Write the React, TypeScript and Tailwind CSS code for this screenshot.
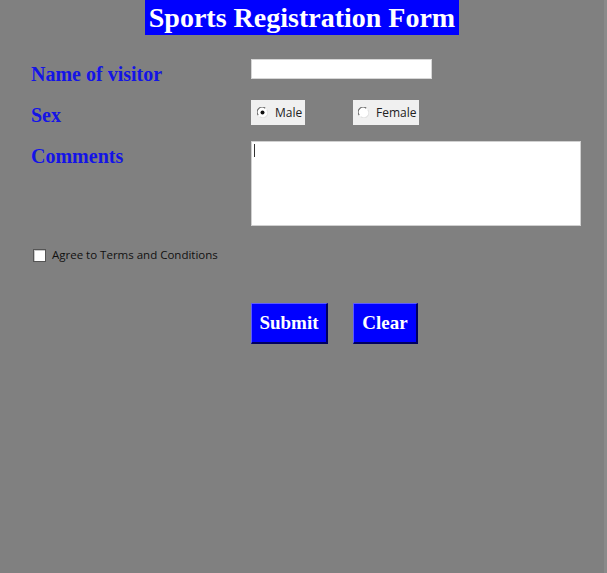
import { useState } from 'react';

function RadioDot({ checked }: { checked: boolean }) {
  return (
    <svg width="11" height="11" viewBox="0 0 11 11" className="shrink-0">
      <circle cx="5.5" cy="5.5" r="5" fill="#ffffff" />
      <path d="M1.2 8.2 A5 5 0 0 1 8.2 1.2" fill="none" stroke="#6b6b6b" strokeWidth="1.1" />
      <path d="M9.8 2.8 A5 5 0 0 1 2.8 9.8" fill="none" stroke="#e3e3e3" strokeWidth="1.1" />
      {checked && <circle cx="5.5" cy="5.5" r="2" fill="#111111" />}
    </svg>
  );
}

export default function App() {
  const [sex, setSex] = useState('male');
  const [agree, setAgree] = useState(false);

  return (
    <div className="flex min-h-[573px] w-full bg-[#808080]">
      <div className="flex-1">
        {/* Title */}
        <div className="flex justify-center">
          <h1 className="h-[35px] bg-[#0000ff] px-[4px] text-[28px] leading-[35px] font-bold text-white [font-family:'Liberation_Serif',serif]">
            Sports Registration Form
          </h1>
        </div>

        <form className="pl-[31px]" onSubmit={(e) => e.preventDefault()}>
          {/* Name */}
          <div className="mt-[24px] flex h-[20px]">
            <label className="mt-[3px] w-[220px] shrink-0 text-[20px] leading-[24px] font-bold text-[#1414e6] [font-family:'Liberation_Serif',serif]">
              Name of visitor
            </label>
            <input
              type="text"
              className="h-[20px] w-[181px] border border-[#d6d6d6] bg-white px-1 text-[12px] outline-none"
            />
          </div>

          {/* Sex */}
          <div className="mt-[21px] flex h-[25px]">
            <div className="mt-[3px] w-[220px] shrink-0 text-[20px] leading-[24px] font-bold text-[#1414e6] [font-family:'Liberation_Serif',serif]">
              Sex
            </div>
            <div className="flex gap-[48px]">
              <button
                type="button"
                onClick={() => setSex('male')}
                className="flex h-[25px] w-[54px] items-center gap-[7px] bg-[#f0f0f0] pl-[6px] text-[12px] text-[#222] [font-family:'Open_Sans',sans-serif]"
              >
                <RadioDot checked={sex === 'male'} />
                Male
              </button>
              <button
                type="button"
                onClick={() => setSex('female')}
                className="flex h-[25px] w-[66px] items-center gap-[7px] bg-[#f0f0f0] pl-[5px] text-[12px] text-[#222] [font-family:'Open_Sans',sans-serif]"
              >
                <RadioDot checked={sex === 'female'} />
                Female
              </button>
            </div>
          </div>

          {/* Comments */}
          <div className="mt-[16px] flex h-[85px]">
            <label className="mt-[3px] w-[220px] shrink-0 text-[20px] leading-[24px] font-bold text-[#1414e6] [font-family:'Liberation_Serif',serif]">
              Comments
            </label>
            <div className="relative h-[85px] w-[330px] border border-[#d0d0d0] bg-white">
              <textarea className="h-full w-full resize-none bg-transparent px-1 text-[12px] outline-none" />
              <span className="absolute top-[2px] left-[2px] h-[13px] w-px bg-[#333]" />
            </div>
          </div>

          {/* Terms */}
          <label className="mt-[21px] ml-[2px] flex h-[16px] items-center gap-[6px] text-[11.5px] text-[#111] [font-family:'Open_Sans',sans-serif]">
            <span
              onClick={() => setAgree(!agree)}
              className="flex h-[13px] w-[13px] items-center justify-center border border-[#555] bg-white shadow-[inset_1px_1px_0_#c8c8c8]"
            >
              {agree && <span className="h-[5px] w-[5px] bg-black" />}
            </span>
            Agree to Terms and Conditions
          </label>

          {/* Buttons */}
          <div className="mt-[40px] ml-[220px] flex gap-[25px]">
            <button
              type="submit"
              className="h-[41px] w-[77px] border-t border-l border-t-[#5c5cff] border-l-[#5c5cff] border-r-2 border-b-2 border-r-[#000060] border-b-[#000060] bg-[#0000ff] text-[19px] font-bold text-white [font-family:'Liberation_Serif',serif]"
            >
              Submit
            </button>
            <button
              type="reset"
              className="h-[41px] w-[65px] border-t border-l border-t-[#5c5cff] border-l-[#5c5cff] border-r-2 border-b-2 border-r-[#000060] border-b-[#000060] bg-[#0000ff] text-[19px] font-bold text-white [font-family:'Liberation_Serif',serif]"
            >
              Clear
            </button>
          </div>
        </form>
      </div>
      <div className="w-[3px] bg-[#8a8a8a]" />
    </div>
  );
}
